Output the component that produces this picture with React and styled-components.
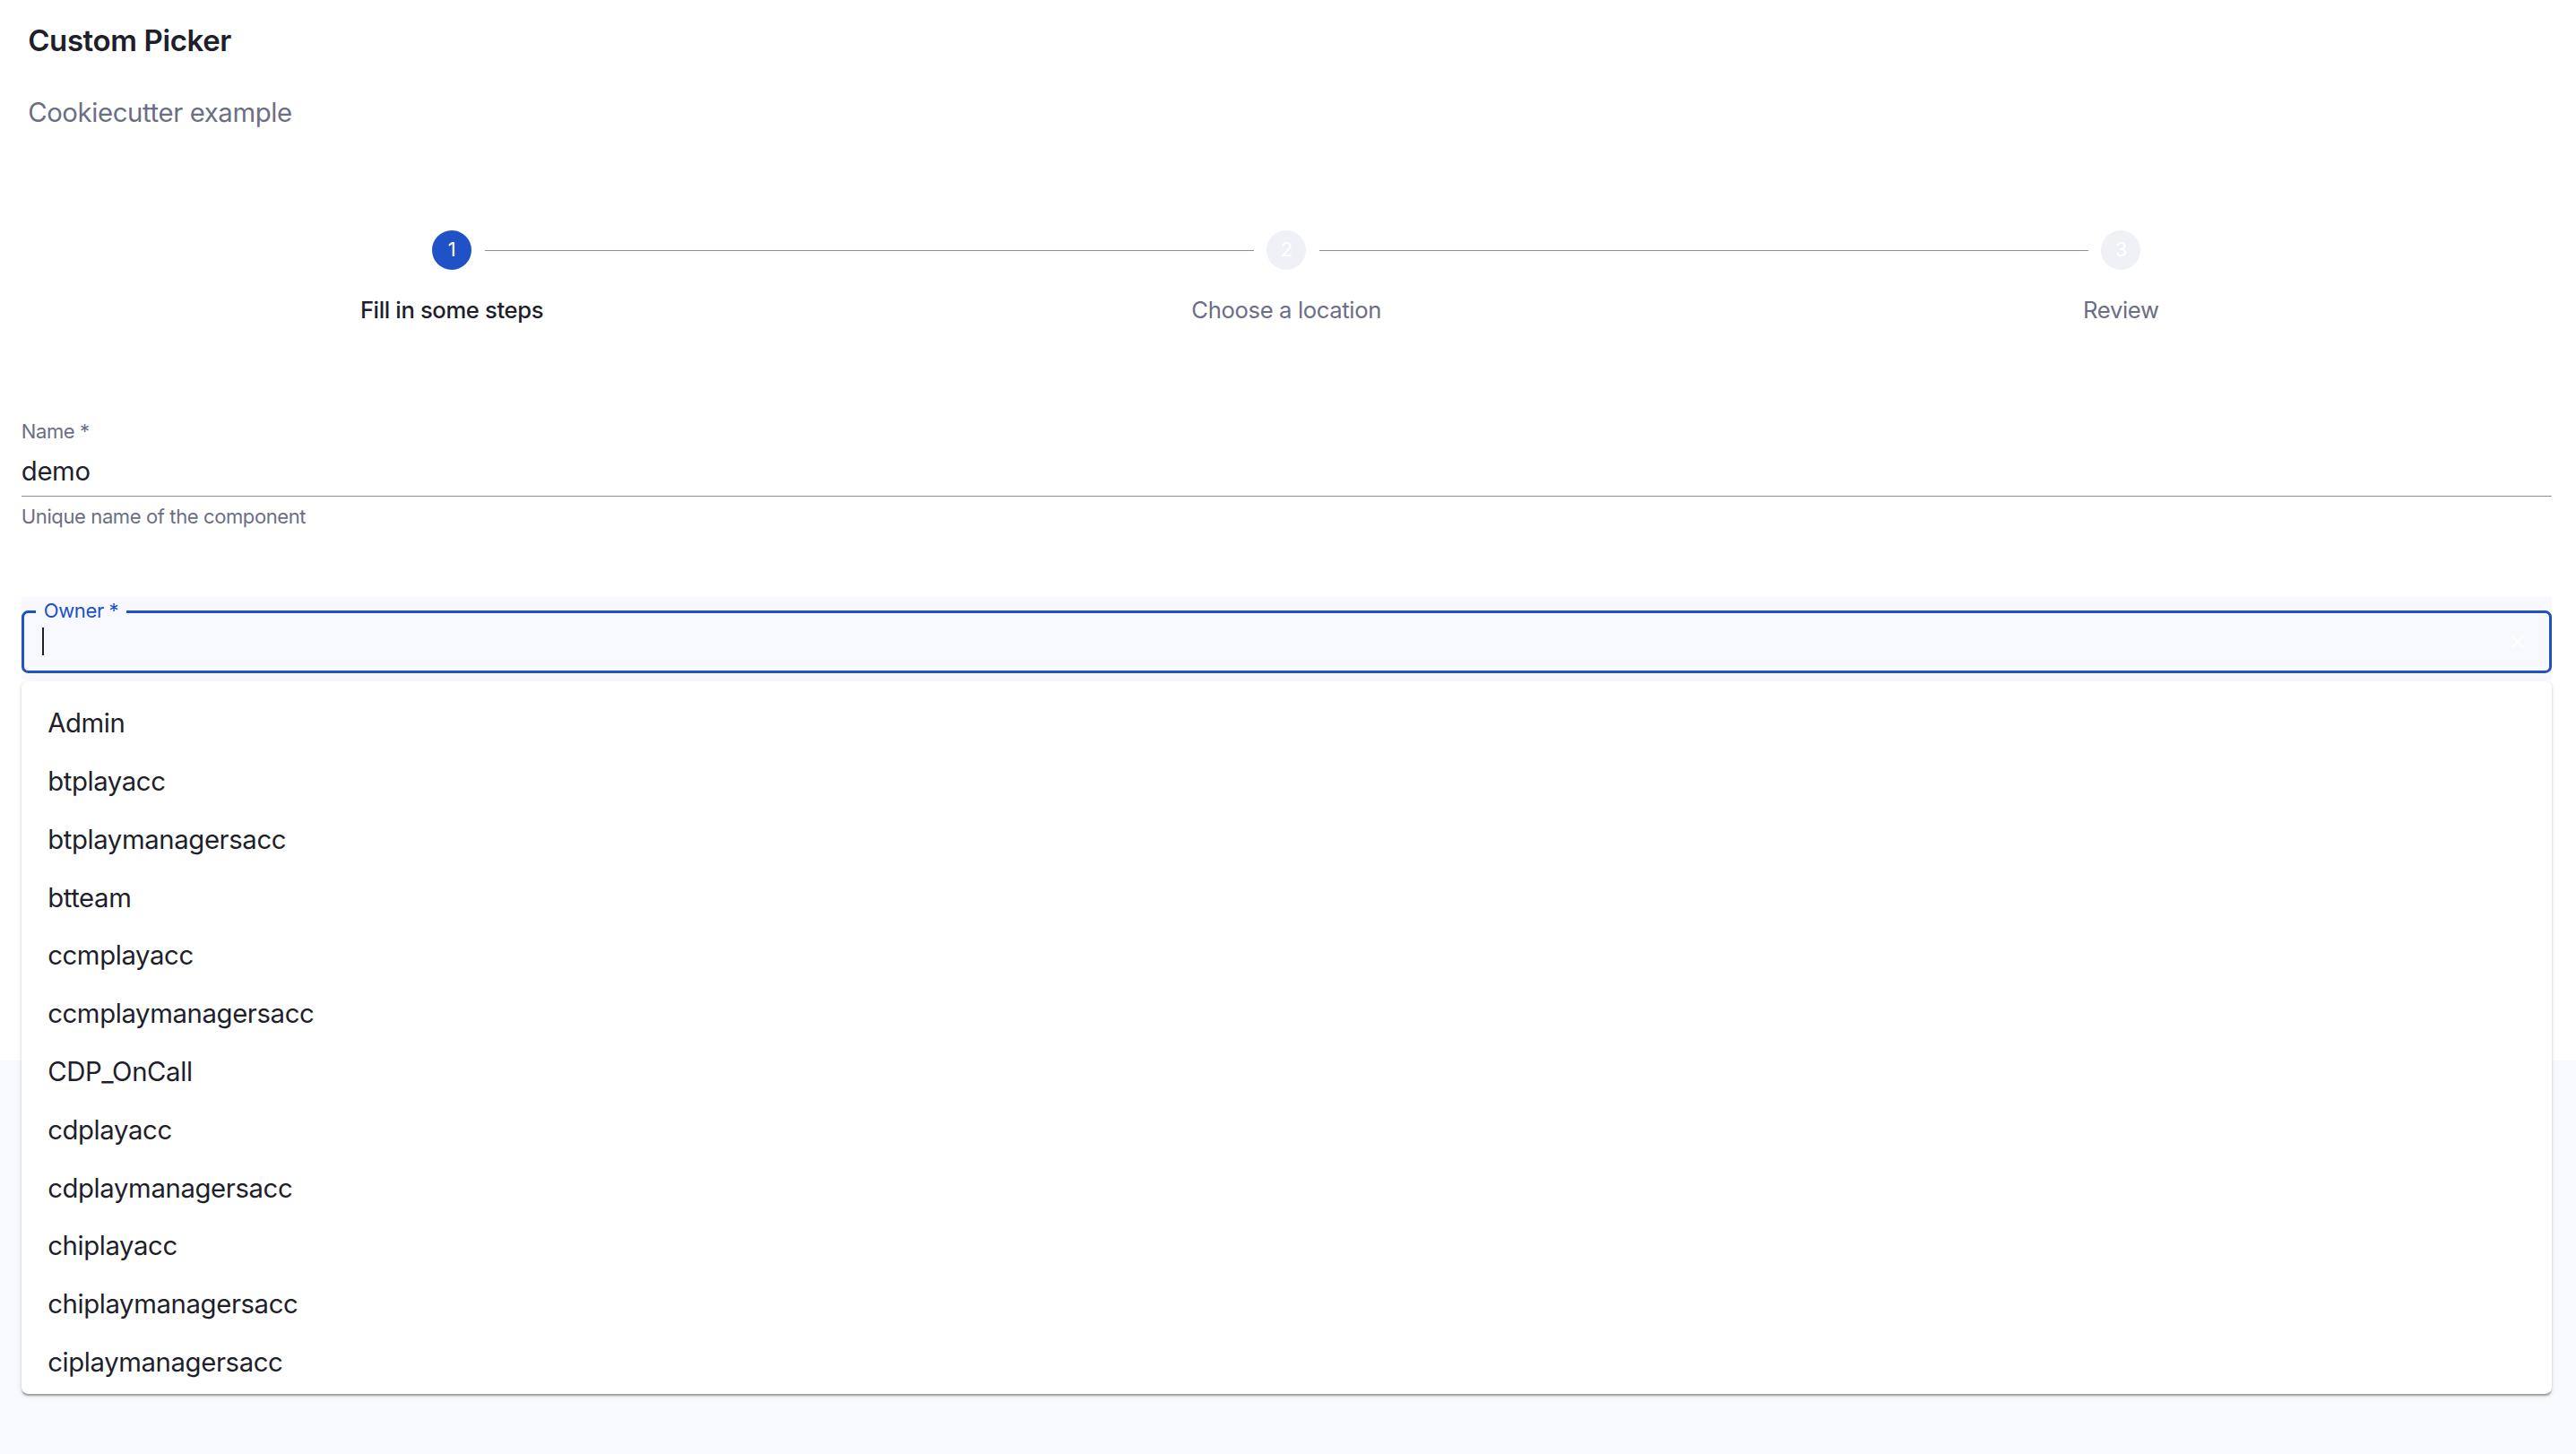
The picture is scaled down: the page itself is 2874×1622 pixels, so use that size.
import React from "react";
import styled, { createGlobalStyle } from "styled-components";

const SCALE = 2874 / 1568;

const owners = [
  "Admin",
  "btplayacc",
  "btplaymanagersacc",
  "btteam",
  "ccmplayacc",
  "ccmplaymanagersacc",
  "CDP_OnCall",
  "cdplayacc",
  "cdplaymanagersacc",
  "chiplayacc",
  "chiplaymanagersacc",
  "ciplaymanagersacc",
];

const steps = ["Fill in some steps", "Choose a location", "Review"];

const App = () => {
  return (
    <Root>
      <GlobalStyle />
      <Card>
        <Header>
          <Title>Custom Picker</Title>
          <Subtitle>Cookiecutter example</Subtitle>
        </Header>

        <Stepper>
          {steps.map((label, i) => (
            <Step key={label}>
              {i > 0 && <Connector />}
              <StepIcon active={i === 0}>{i + 1}</StepIcon>
              <StepLabel active={i === 0}>{label}</StepLabel>
            </Step>
          ))}
        </Stepper>

        <NameField>
          <SmallLabel>Name *</SmallLabel>
          <UnderlineInput>demo</UnderlineInput>
          <Helper>Unique name of the component</Helper>
        </NameField>

        <OwnerField>
          <OutlinedBox>
            <FloatingLabel>Owner *</FloatingLabel>
            <Caret />
            <ClearIcon viewBox="0 0 24 24">
              <path d="M19 6.41 17.59 5 12 10.59 6.41 5 5 6.41 10.59 12 5 17.59 6.41 19 12 13.41 17.59 19 19 17.59 13.41 12z" />
            </ClearIcon>
          </OutlinedBox>
          <Popper>
            <Listbox>
              {owners.map((o) => (
                <Option key={o}>{o}</Option>
              ))}
            </Listbox>
          </Popper>
        </OwnerField>

        <ButtonRow>
          <NextButton>Next</NextButton>
        </ButtonRow>
      </Card>
    </Root>
  );
};

const GlobalStyle = createGlobalStyle`
  html, body {
    margin: 0;
    padding: 0;
    background: #f8f9fc;
  }
  body {
    font-family: Inter, "Noto Sans", "Liberation Sans", sans-serif;
    letter-spacing: -0.013em;
    color: #1e1f2b;
  }
`;

const Root = styled.div`
  zoom: ${SCALE};
  width: 1568px;
  min-height: 885px;
`;

const Card = styled.div`
  background: #fff;
  padding: 0 15px 13px 13px;
`;

const Header = styled.div`
  padding: 13px 4px 0;
`;

const Title = styled.h1`
  margin: 0;
  font-size: 18px;
  line-height: 24px;
  font-weight: 600;
  color: #1e1f2b;
`;

const Subtitle = styled.p`
  margin: 20px 0 0;
  font-size: 16px;
  line-height: 24px;
  color: #6b6e85;
`;

const Stepper = styled.div`
  display: grid;
  grid-template-columns: repeat(3, 1fr);
  padding: 0 8px;
  margin-top: 59px;
`;

const Step = styled.div`
  position: relative;
  display: flex;
  flex-direction: column;
  align-items: center;
`;

const Connector = styled.span`
  position: absolute;
  top: 12px;
  left: calc(-50% + 20px);
  right: calc(50% + 20px);
  border-top: 1px solid #8e8ca0;
`;

const StepIcon = styled.div`
  width: 24px;
  height: 24px;
  border-radius: 50%;
  background: ${(p) => (p.active ? "#2151c7" : "#f0f0f7")};
  color: #fff;
  font-size: 12px;
  line-height: 24px;
  text-align: center;
`;

const StepLabel = styled.div`
  margin-top: 15px;
  font-size: 14px;
  line-height: 20px;
  font-weight: ${(p) => (p.active ? 500 : 400)};
  color: ${(p) => (p.active ? "#1e1f2b" : "#6b6e85")};
`;

const NameField = styled.div`
  margin-top: 56px;
  display: flex;
  flex-direction: column;
`;

const SmallLabel = styled.label`
  font-size: 12px;
  line-height: 16px;
  color: #6b6e85;
`;

const UnderlineInput = styled.div`
  margin-top: 4px;
  font-size: 16px;
  line-height: 24px;
  padding-bottom: 3px;
  border-bottom: 1px solid #8f8f9b;
  color: #1e1f2b;
`;

const Helper = styled.span`
  margin-top: 4px;
  font-size: 12px;
  line-height: 16px;
  color: #6b6e85;
`;

const OwnerField = styled.div`
  position: relative;
  margin-top: 41px;
  padding: 8px 0 4px;
  background: #f8f9fe;
`;

const OutlinedBox = styled.div`
  position: relative;
  box-sizing: border-box;
  height: 38px;
  display: flex;
  align-items: center;
  justify-content: space-between;
  padding: 0 12px 0 11px;
  border: 2px solid #2151c7;
  border-radius: 4px;
`;

const FloatingLabel = styled.span`
  position: absolute;
  top: -9px;
  left: 7px;
  padding: 0 5px;
  background: #f8f9fe;
  font-size: 12px;
  line-height: 16px;
  color: #2151c7;
`;

const Caret = styled.span`
  width: 1px;
  height: 17px;
  background: #1e1f2b;
`;

const ClearIcon = styled.svg`
  width: 14px;
  height: 14px;
  fill: #ffffff;
`;

const Popper = styled.div`
  position: absolute;
  top: calc(100% + 1px);
  left: 0;
  right: 0;
  z-index: 2;
  height: 434px;
  overflow: hidden;
  background: #fff;
  border-radius: 4px;
  box-shadow: 0 2px 1px -1px rgba(0, 0, 0, 0.2), 0 1px 1px 0 rgba(0, 0, 0, 0.14),
    0 1px 3px 0 rgba(0, 0, 0, 0.12);
`;

const Listbox = styled.ul`
  list-style: none;
  margin: 0;
  padding: 8px 0 0;
`;

const Option = styled.li`
  display: flex;
  align-items: center;
  height: 35.36px;
  padding: 0 16px;
  font-size: 16px;
  color: #1e1f2b;
`;

const ButtonRow = styled.div`
  display: flex;
  justify-content: flex-end;
  margin-top: 183px;
`;

const NextButton = styled.button`
  height: 36px;
  padding: 0 22px;
  border: 1px solid rgba(33, 81, 199, 0.5);
  border-radius: 4px;
  background: #fff;
  color: #2151c7;
  font-family: Inter, "Liberation Sans", sans-serif;
  font-size: 14px;
  font-weight: 500;
`;

export default App;
